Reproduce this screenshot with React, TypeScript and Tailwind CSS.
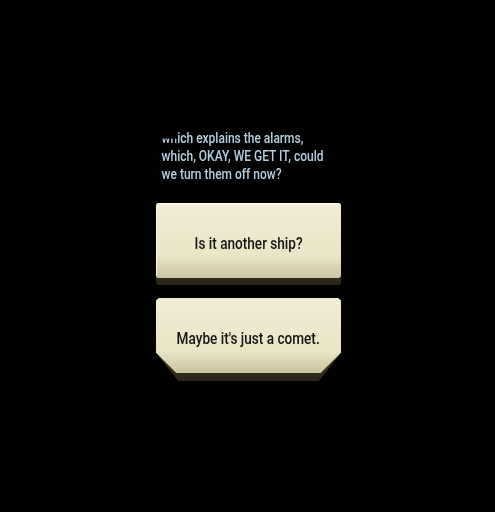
import React from 'react';

const font = { fontFamily: 'Roboto, "Noto Sans", sans-serif' };

const App: React.FC = () => {
  return (
    <div className="w-[495px] h-[512px] bg-black relative overflow-hidden" style={font}>
      <div className="absolute left-[156px] top-[129px] w-[185px] flex flex-col">
        {/* dialogue line, condensed look */}
        <div className="pl-[7px] text-[15px] leading-[18px] font-medium text-[#b6d0e2] w-[240px] scale-x-[0.8] origin-left whitespace-nowrap">
          <p>
            <span className="bg-gradient-to-b from-transparent from-[50%] to-[#b6d0e2] to-[56%] bg-clip-text text-transparent">wh</span>
            ich explains the alarms,
          </p>
          <p>which, OKAY, WE GET IT, could</p>
          <p>we turn them off now?</p>
        </div>

        {/* choices */}
        <div className="mt-[20px] flex flex-col gap-[13px]">
          <button className="h-[82px] rounded-[3px] bg-gradient-to-b from-[#6a6348] to-[#2a2718] pb-[7px] shadow-[0_2px_4px_rgba(0,0,0,0.8)]">
            <div className="h-full rounded-[3px] bg-gradient-to-b from-[#f1edd4] via-[#eae5c7] via-70% to-[#cbc4a1] flex items-center justify-center pt-[6px] border-t border-l border-[#fbf9ec]">
              <span className="inline-block text-[16px] font-medium text-[#141410] scale-x-[0.85]">Is it another ship?</span>
            </div>
          </button>
          <button className="h-[83px] bg-gradient-to-b from-[#6a6348] to-[#2a2718] pb-[8px] [clip-path:polygon(1.5%_0,98.5%_0,100%_3%,100%_66%,88%_100%,12%_100%,0_66%,0_3%)]">
            <div className="h-full bg-gradient-to-b from-[#f1edd4] via-[#eae5c7] via-70% to-[#cbc4a1] flex items-center justify-center pt-[6px] [clip-path:polygon(1.5%_0,98.5%_0,100%_3%,100%_73%,89%_100%,11%_100%,0_73%,0_3%)]">
              <span className="inline-block text-[16px] font-medium text-[#141410] scale-x-[0.85]">Maybe it's just a comet.</span>
            </div>
          </button>
        </div>
      </div>
    </div>
  );
};

export default App;
